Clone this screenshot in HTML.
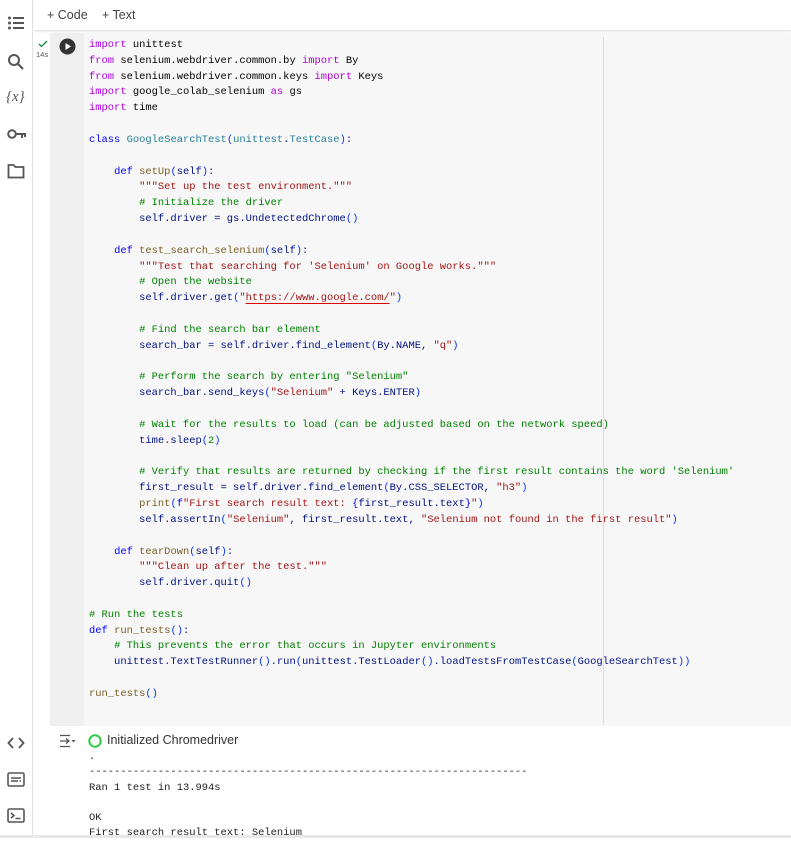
<!DOCTYPE html>
<html><head><meta charset="utf-8">
<style>
*{margin:0;padding:0;box-sizing:border-box}
body{width:791px;height:838px;overflow:hidden;background:#fff;font-family:"Liberation Sans",sans-serif;position:relative}
.side{position:absolute;left:0;top:0;width:33px;height:838px;border-right:1px solid #e0e0e0;background:#fff}
.side svg{position:absolute;left:7px}
.top{position:absolute;left:34px;top:0;right:0;height:31px;border-bottom:1px solid #e3e3e3;box-shadow:0 1px 2px rgba(0,0,0,.08);font-size:12.5px;color:#444}
.top span{position:absolute;top:8px}
.gut{position:absolute;left:50px;top:33px;width:34px;height:693px;background:#efefef}
.code{position:absolute;left:84px;top:33px;right:0;height:693px;background:#f7f7f7}
.ruler{position:absolute;left:603px;top:37px;width:1px;height:689px;background:#ddd}
pre{position:absolute;left:89px;top:38px;font-family:"Liberation Mono",monospace;font-size:10.45px;line-height:15.83px;color:#001080}
.k{color:#af00db}.b{color:#0000ff}.t{color:#267f99}.s{color:#a31515}.c{color:#008000}.p{color:#0431fa}.f{color:#795e26}.m{color:#000}
.u{text-decoration:underline;text-decoration-color:#d00;text-underline-offset:3px}
.out{position:absolute;left:89px;top:749px;font-family:"Liberation Mono",monospace;font-size:10.45px;line-height:15.3px;color:#212121}
</style></head><body>
<div class="side">
<svg style="top:15px" width="18" height="16" viewBox="0 0 18 16"><g fill="#555"><circle cx="2.5" cy="3" r="1.5"/><circle cx="2.5" cy="8" r="1.5"/><circle cx="2.5" cy="13" r="1.5"/><rect x="6" y="2" width="11" height="2"/><rect x="6" y="7" width="11" height="2"/><rect x="6" y="12" width="11" height="2"/></g></svg>
<svg style="top:53px" width="18" height="18" viewBox="0 0 18 18"><circle cx="7" cy="7" r="5" fill="none" stroke="#555" stroke-width="2"/><path d="M11 11l5 5" stroke="#555" stroke-width="2.2"/></svg>
<div style="position:absolute;left:6px;top:89px;font-family:'Liberation Serif',serif;font-style:italic;font-size:15px;color:#555">{x}</div>
<svg style="top:128px" width="20" height="12" viewBox="0 0 20 12"><circle cx="5" cy="6" r="3.8" fill="none" stroke="#555" stroke-width="2"/><path d="M9 6h10M15 6v4M18 6v3" stroke="#555" stroke-width="2"/></svg>
<svg style="top:163px" width="18" height="16" viewBox="0 0 18 16"><path d="M1.5 2h5l2 2h8v10.5h-15z" fill="none" stroke="#555" stroke-width="1.8"/></svg>
<svg style="top:736px" width="18" height="14" viewBox="0 0 18 14"><path d="M6 2L1.5 7 6 12M12 2l4.5 5L12 12" fill="none" stroke="#555" stroke-width="1.8"/></svg>
<svg style="top:772px" width="18" height="15" viewBox="0 0 18 15"><rect x="1" y="1" width="16" height="13" rx="1.5" fill="none" stroke="#555" stroke-width="1.6"/><path d="M4 6h10M4 9h7M12.5 9h1.5" stroke="#555" stroke-width="1.5"/></svg>
<svg style="top:808px" width="18" height="15" viewBox="0 0 18 15"><rect x="1" y="1" width="16" height="13" rx="1.5" fill="none" stroke="#555" stroke-width="1.6"/><path d="M4 5l3 2.5L4 10M8.5 10.5h5" fill="none" stroke="#555" stroke-width="1.5"/></svg>
</div>
<div class="top"><span style="left:13px">+ Code</span><span style="left:68px">+ Text</span></div>
<div class="gut"></div>
<div class="code"></div>
<div class="ruler"></div>
<svg style="position:absolute;left:38px;top:40px" width="10" height="8" viewBox="0 0 10 8"><path d="M1 4l2.5 2.5L9 1" fill="none" stroke="#0a8a3a" stroke-width="1.3"/></svg>
<div style="position:absolute;left:36px;top:50px;font-size:7.5px;color:#555">14s</div>
<svg style="position:absolute;left:59px;top:38px" width="17" height="17" viewBox="0 0 17 17"><circle cx="8.5" cy="8.5" r="8" fill="#333"/><path d="M6.5 5v7l5.5-3.5z" fill="#fff"/></svg>
<pre><span class="k">import</span> <span class="m">unittest</span>
<span class="k">from</span> <span class="m">selenium.webdriver.common.by</span> <span class="k">import</span> <span class="m">By</span>
<span class="k">from</span> <span class="m">selenium.webdriver.common.keys</span> <span class="k">import</span> <span class="m">Keys</span>
<span class="k">import</span> <span class="m">google_colab_selenium</span> <span class="k">as</span> <span class="m">gs</span>
<span class="k">import</span> <span class="m">time</span>

<span class="b">class</span> <span class="t">GoogleSearchTest</span><span class="p">(</span><span class="t">unittest</span>.<span class="t">TestCase</span><span class="p">)</span>:

    <span class="b">def</span> <span class="f">setUp</span><span class="p">(</span>self<span class="p">)</span>:
        <span class="s">"""Set up the test environment."""</span>
        <span class="c"># Initialize the driver</span>
        self.driver = gs.UndetectedChrome<span class="p">()</span>

    <span class="b">def</span> <span class="f">test_search_selenium</span><span class="p">(</span>self<span class="p">)</span>:
        <span class="s">"""Test that searching for 'Selenium' on Google works."""</span>
        <span class="c"># Open the website</span>
        self.driver.get<span class="p">(</span><span class="s">"<span class="u">https://www.google.com/</span>"</span><span class="p">)</span>

        <span class="c"># Find the search bar element</span>
        search_bar = self.driver.find_element<span class="p">(</span>By.NAME, <span class="s">"q"</span><span class="p">)</span>

        <span class="c"># Perform the search by entering "Selenium"</span>
        search_bar.send_keys<span class="p">(</span><span class="s">"Selenium"</span> + Keys.ENTER<span class="p">)</span>

        <span class="c"># Wait for the results to load (can be adjusted based on the network speed)</span>
        time.sleep<span class="p">(</span><span class="c">2</span><span class="p">)</span>

        <span class="c"># Verify that results are returned by checking if the first result contains the word 'Selenium'</span>
        first_result = self.driver.find_element<span class="p">(</span>By.CSS_SELECTOR, <span class="s">"h3"</span><span class="p">)</span>
        <span class="f">print</span><span class="p">(</span><span class="b">f</span><span class="s">"First search result text: </span><span class="b">{</span>first_result.text<span class="b">}</span><span class="s">"</span><span class="p">)</span>
        self.assertIn<span class="p">(</span><span class="s">"Selenium"</span>, first_result.text, <span class="s">"Selenium not found in the first result"</span><span class="p">)</span>

    <span class="b">def</span> <span class="f">tearDown</span><span class="p">(</span>self<span class="p">)</span>:
        <span class="s">"""Clean up after the test."""</span>
        self.driver.quit<span class="p">()</span>

<span class="c"># Run the tests</span>
<span class="b">def</span> <span class="f">run_tests</span><span class="p">()</span>:
    <span class="c"># This prevents the error that occurs in Jupyter environments</span>
    unittest.TextTestRunner<span class="p">()</span>.run<span class="p">(</span>unittest.TestLoader<span class="p">()</span>.loadTestsFromTestCase<span class="p">(</span>GoogleSearchTest<span class="p">))</span>

<span class="f">run_tests</span><span class="p">()</span></pre>
<svg style="position:absolute;left:59px;top:734px" width="18" height="14" viewBox="0 0 18 14"><path d="M1 1.5h10M1 7h9M7 4.5L10 7 7 9.5M1 12.5h10" fill="none" stroke="#555" stroke-width="1.3"/><path d="M12.5 6h4l-2 2.5z" fill="#555"/></svg>
<svg style="position:absolute;left:88px;top:734px" width="14" height="14" viewBox="0 0 14 14"><circle cx="7" cy="7" r="5.7" fill="none" stroke="#2ecc40" stroke-width="2"/></svg>
<div style="position:absolute;left:107px;top:733px;font-size:12.5px;color:#333">Initialized Chromedriver</div>
<pre class="out" style="top:750px;position:absolute">.
----------------------------------------------------------------------
Ran 1 test in 13.994s

OK
First search result text: Selenium</pre>
<div style="position:absolute;left:0;top:835px;width:791px;height:3px;background:#e8e8e8"></div>
</body></html>
